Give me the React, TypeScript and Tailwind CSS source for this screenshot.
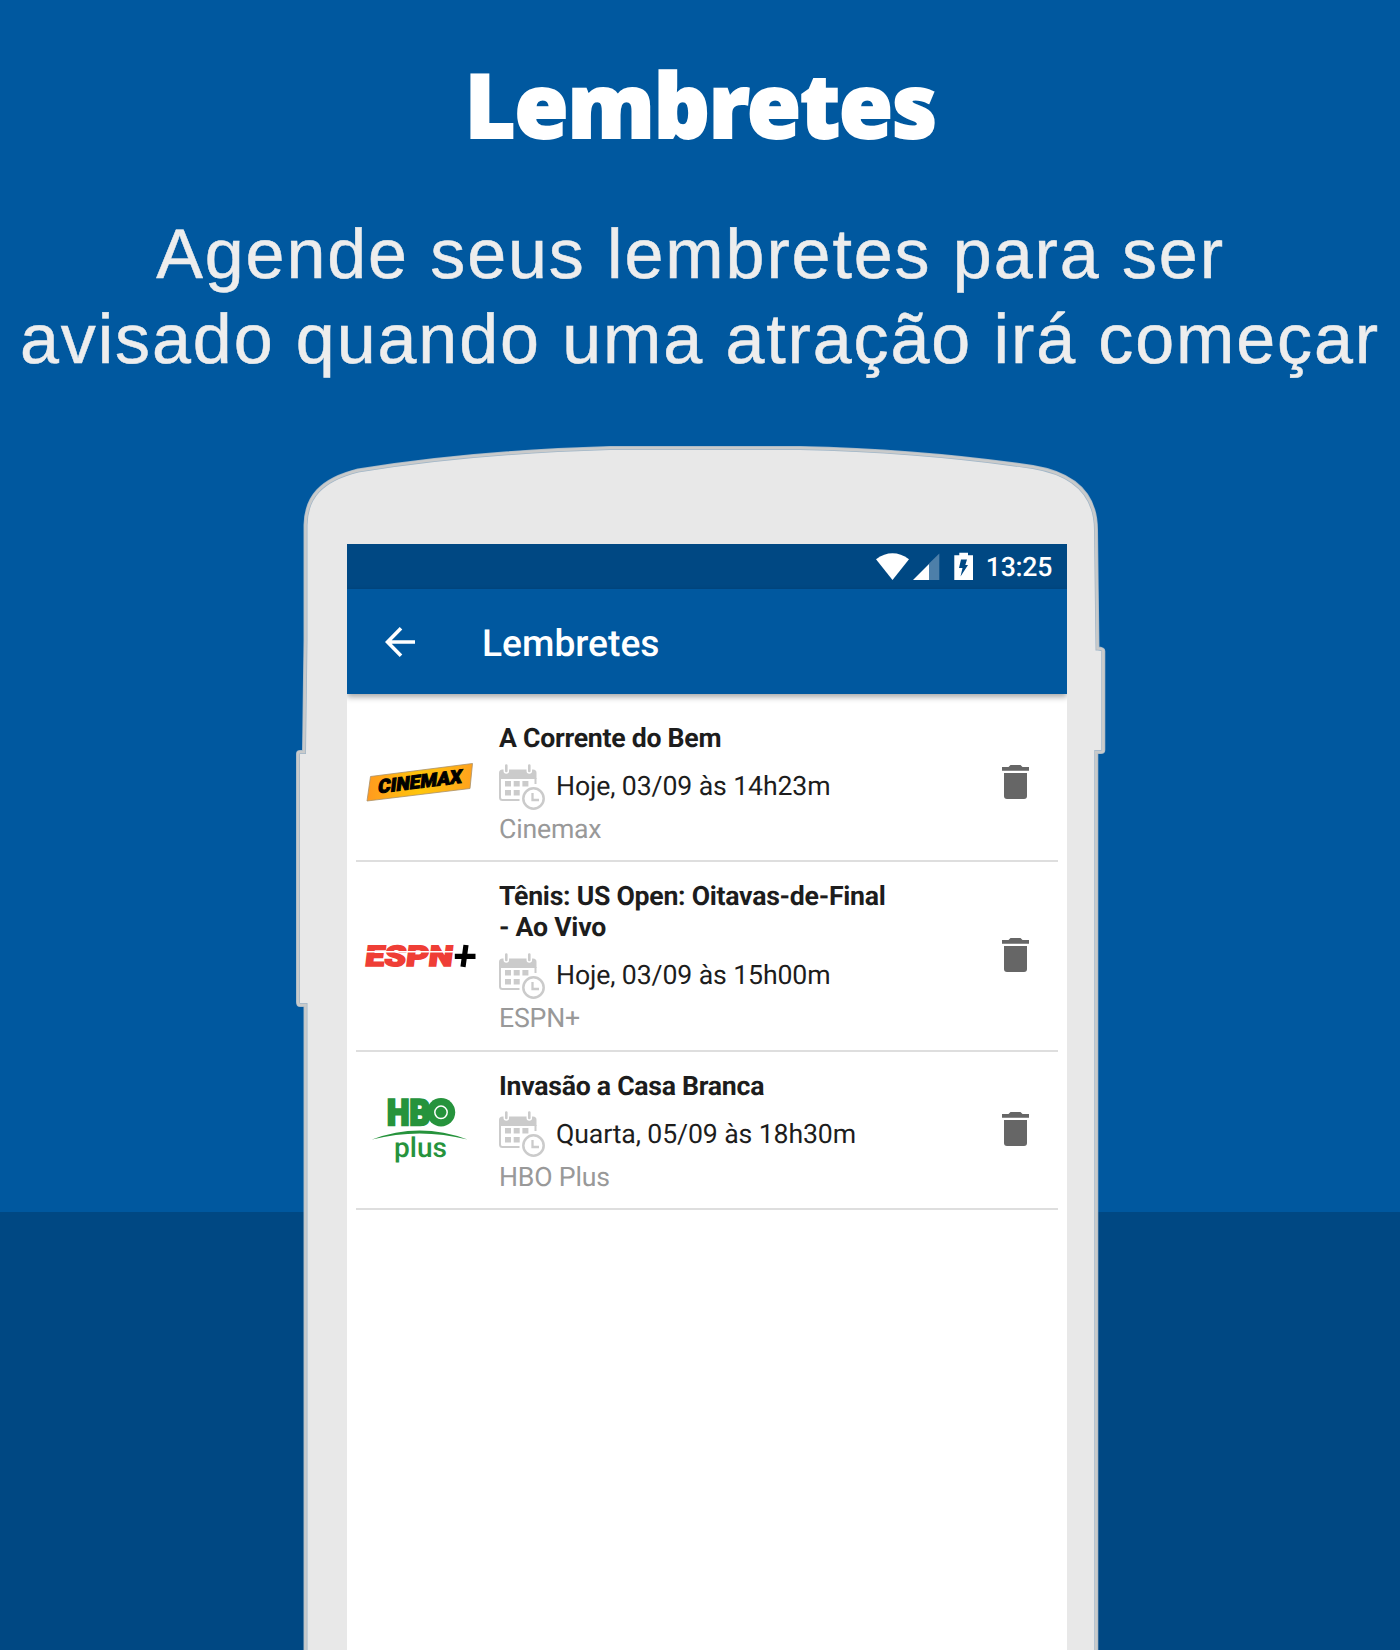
import React from "react";

type Reminder = {
  title: string[];
  when: string;
  channel: string;
  logo: React.ReactNode;
};

function CinemaxLogo() {
  return (
    <svg viewBox="0 0 120 80" className="h-20 w-[120px]">
      <defs>
        <linearGradient id="cinemax" x1="0" x2="1" y1="0" y2="0">
          <stop offset="0" stopColor="#ff9a1f" />
          <stop offset="0.5" stopColor="#ffc60b" />
          <stop offset="1" stopColor="#ffa21d" />
        </linearGradient>
      </defs>
      <path d="M11.5 34.5 113.500 21.500 111 46.500 8 59Z" fill="url(#cinemax)" stroke="#a9906a" strokeWidth="0.8" />
      <text
        transform="matrix(1 -0.123 -0.12 1 18.5 51.2)"
        x="0"
        y="0"
        textLength="84"
        lengthAdjust="spacingAndGlyphs"
        fontFamily="Roboto"
        fontWeight="900"
        fontSize="19"
        fill="#000"
        stroke="#000"
        strokeWidth="1"
      >
        CINEMAX
      </text>
    </svg>
  );
}

function EspnLogo() {
  return (
    <svg viewBox="0 0 120 80" className="h-20 w-[120px]">
      <text
        transform="matrix(1 0 -0.12 1 5.2 50.2)"
        textLength="88"
        lengthAdjust="spacingAndGlyphs"
        fontFamily="Roboto"
        fontWeight="900"
        fontSize="28.5"
        fill="#ef3e36"
        stroke="#ef3e36"
        strokeWidth="1.5"
      >
        ESPN
      </text>
      <path d="M5 35.800h90" stroke="#fff" strokeWidth="1.4" />
      <path d="M107 29 104 50.800M95.800 40.300H116.500" stroke="#000" strokeWidth="5.200" />
    </svg>
  );
}

function HboPlusLogo() {
  return (
    <svg viewBox="0 0 120 80" className="h-20 w-[120px]">
      <text
        x="28"
        y="35.300"
        textLength="43"
        lengthAdjust="spacingAndGlyphs"
        fontFamily="Roboto"
        fontWeight="900"
        fontSize="36"
        fill="#26933c"
        stroke="#26933c"
        strokeWidth="2.4"
      >
        HB
      </text>
      <circle cx="82" cy="22.300" r="14.2" fill="#26933c" />
      <circle cx="82" cy="22.300" r="6.2" fill="none" stroke="#fff" strokeWidth="1.5" />
      <path d="M13 49.500Q60.500 31.500 108.500 49.500Q60.500 37.500 13 49.500Z" fill="#26933c" />
      <text
        x="35"
        y="67.300"
        textLength="53"
        lengthAdjust="spacingAndGlyphs"
        fontFamily="Roboto"
        fontWeight="500"
        fontSize="27.5"
        fill="#26933c"
      >
        plus
      </text>
    </svg>
  );
}

const reminders: Reminder[] = [
  { title: ["A Corrente do Bem"], when: "Hoje, 03/09 às 14h23m", channel: "Cinemax", logo: <CinemaxLogo /> },
  {
    title: ["Tênis: US Open: Oitavas-de-Final", "- Ao Vivo"],
    when: "Hoje, 03/09 às 15h00m",
    channel: "ESPN+",
    logo: <EspnLogo />,
  },
  { title: ["Invasão a Casa Branca"], when: "Quarta, 05/09 às 18h30m", channel: "HBO Plus", logo: <HboPlusLogo /> },
];

function CalendarClock() {
  return (
    <svg viewBox="0 0 46 46" className="h-[46px] w-[46px] shrink-0" fill="#cbcbcb">
      <path d="M0 15V9Q0 5.500 3.500 5.500H34Q37.500 5.500 37.500 9V15Z" />
      <path d="M1 14V33.500Q1 36 3.500 36H20.500M36.500 14V20" fill="none" stroke="#cbcbcb" strokeWidth="2" />
      <path d="M7.300 2V7M30.300 2V7" stroke="#fff" strokeWidth="5.500" strokeLinecap="round" />
      <path d="M7.300 1.500V7M30.300 1.500V7" stroke="#cbcbcb" strokeWidth="2.600" strokeLinecap="round" />
      <path d="M6 17h6v5.500H6zM14.700 17h6v5.500h-6zM23.400 17h6v5.500h-6zM6 26h6v5.500H6zM14.700 26h6v5.500h-6z" />
      <circle cx="34.500" cy="34.500" r="10.200" fill="#fff" stroke="#cbcbcb" strokeWidth="2.500" />
      <path d="M33.500 29V36H40" fill="none" stroke="#cbcbcb" strokeWidth="2.300" />
    </svg>
  );
}

function Trash() {
  return (
    <svg viewBox="0 0 27 34" className="h-[34px] w-[27px]" fill="#666">
      <path d="M0 2H6.500L8.500 0H18.500L20.500 2H27V5.700H0Z" />
      <path d="M2 8H25V31Q25 34 22 34H5Q2 34 2 31Z" />
    </svg>
  );
}

function Body() {
  const d =
    "M305.500 1660V1005H300Q298 1005 298 1002V754Q298 752 300 752H304L305.500 640V525C306 498 320 480 358 470.500C440 457 525 450.500 610 448H800C890 450 965 457 1033 467C1075 474 1096 495 1096 530L1097.500 648.500Q1103.300 648.500 1103.300 651V750Q1103.300 752 1101 752H1096.300V1660Z";
  return (
    <svg viewBox="0 0 1400 1210" className="pointer-events-none absolute left-[-303px] top-0 h-[1210px] w-[1400px]">
      <g transform="translate(0 -440)">
        <path d={d} fill="#e8e8e8" stroke="#a0b6c8" strokeWidth="4" />
        <path d={d} fill="none" stroke="#c9caca" strokeWidth="2.600" />
      </g>
    </svg>
  );
}

function StatusBar() {
  return (
    <div className="flex h-[45px] items-start justify-end bg-[#004883] pr-[15px]">
      <svg viewBox="0 0 98 30" className="mt-2 h-[30px] w-[98px]">
        <path d="M0 7.200Q16.500-4.500 33 7.200L16.500 28Z" fill="#fff" />
        <path d="M53 11.500 63.300 1.500V28H53Z" fill="#4d7fa9" />
        <path d="M37 28 53 12V28Z" fill="#fff" />
        <path d="M78.300 3.200H83.300V.7H92V3.200H97V28H78.300Z" fill="#fff" />
        <path d="M85 7.500H91L89.300 13H92L84.500 24.500L86.500 16H83Z" fill="#004883" />
      </svg>
      <span className="ml-[12px] mt-2 text-[26.670px] font-medium leading-[31px] tracking-[-0.300px] text-white">
        13:25
      </span>
    </div>
  );
}

function Row({ item }: { item: Reminder }) {
  return (
    <div className="mx-[9px] flex border-b-2 border-[#dedede] pb-[15.300px] pt-[19px]">
      <div className="flex w-[143px] shrink-0 items-center pb-[4px] pl-[3px]">{item.logo}</div>
      <div className="min-w-0 flex-1">
        <h3 className="whitespace-nowrap text-[26.670px] font-bold leading-[31px] tracking-[-0.270px] text-[#1d1d1d]">
          {item.title.map((line) => (
            <span key={line} className="block">
              {line}
            </span>
          ))}
        </h3>
        <div className="mt-2 flex h-[49px] items-center">
          <CalendarClock />
          <span className="ml-[11px] whitespace-nowrap text-[26.670px] leading-[31px] tracking-[-0.120px] text-[#1d1d1d]">
            {item.when}
          </span>
        </div>
        <p className="mt-[3px] text-[26.670px] leading-[31px] tracking-[-0.200px] text-[#999]">{item.channel}</p>
      </div>
      <button className="mr-[29px] flex items-center pb-[5px]" aria-label="Excluir">
        <Trash />
      </button>
    </div>
  );
}

export default function App() {
  return (
    <main className="flex h-[1650px] w-[1400px] flex-col overflow-hidden bg-[linear-gradient(#00589f_1212px,#004883_1212px)] font-['Roboto',sans-serif] [text-rendering:geometricPrecision]">
      <header className="h-[440px] shrink-0 text-center">
        <h1 className="pt-[42px] font-['Noto_Sans',sans-serif] text-[89px] font-black leading-[125px] text-white">
          <span className="inline-block scale-x-[0.98] tracking-[-1px] [-webkit-text-stroke:2px_#fff]">Lembretes</span>
        </h1>
        <p className="mt-[45px] whitespace-nowrap font-['Liberation_Sans',sans-serif] text-[70px] leading-[85px] tracking-[1.900px] text-[#ededed] [-webkit-text-stroke:0.5px_#ededed]">
          <span className="block pr-[19px]">Agende seus lembretes para ser</span>
          <span className="block">avisado quando uma atração irá começar</span>
        </p>
      </header>
      <section className="relative ml-[303px] h-[1210px] w-[795px] shrink-0 pl-11 pt-[104px]">
        <Body />
        <div className="relative h-[1106px] w-[720px] overflow-hidden bg-white">
          <StatusBar />
          <div className="relative flex h-[105px] items-center bg-[#00589f] pl-[38px] text-white shadow-[0_3px_6px_rgba(0,0,0,0.35)]">
            <svg viewBox="0 0 30 30" className="h-[30px] w-[30px]" fill="none" stroke="#fff" strokeWidth="3.600">
              <path d="M16 1.300 2.500 15 16 28.700M2.500 15H30" />
            </svg>
            <span className="ml-[67px] mt-[6px] text-[37.200px] font-medium">Lembretes</span>
          </div>
          <div className="pt-[10px]">
            {reminders.map((r) => (
              <Row key={r.channel} item={r} />
            ))}
          </div>
        </div>
      </section>
    </main>
  );
}
